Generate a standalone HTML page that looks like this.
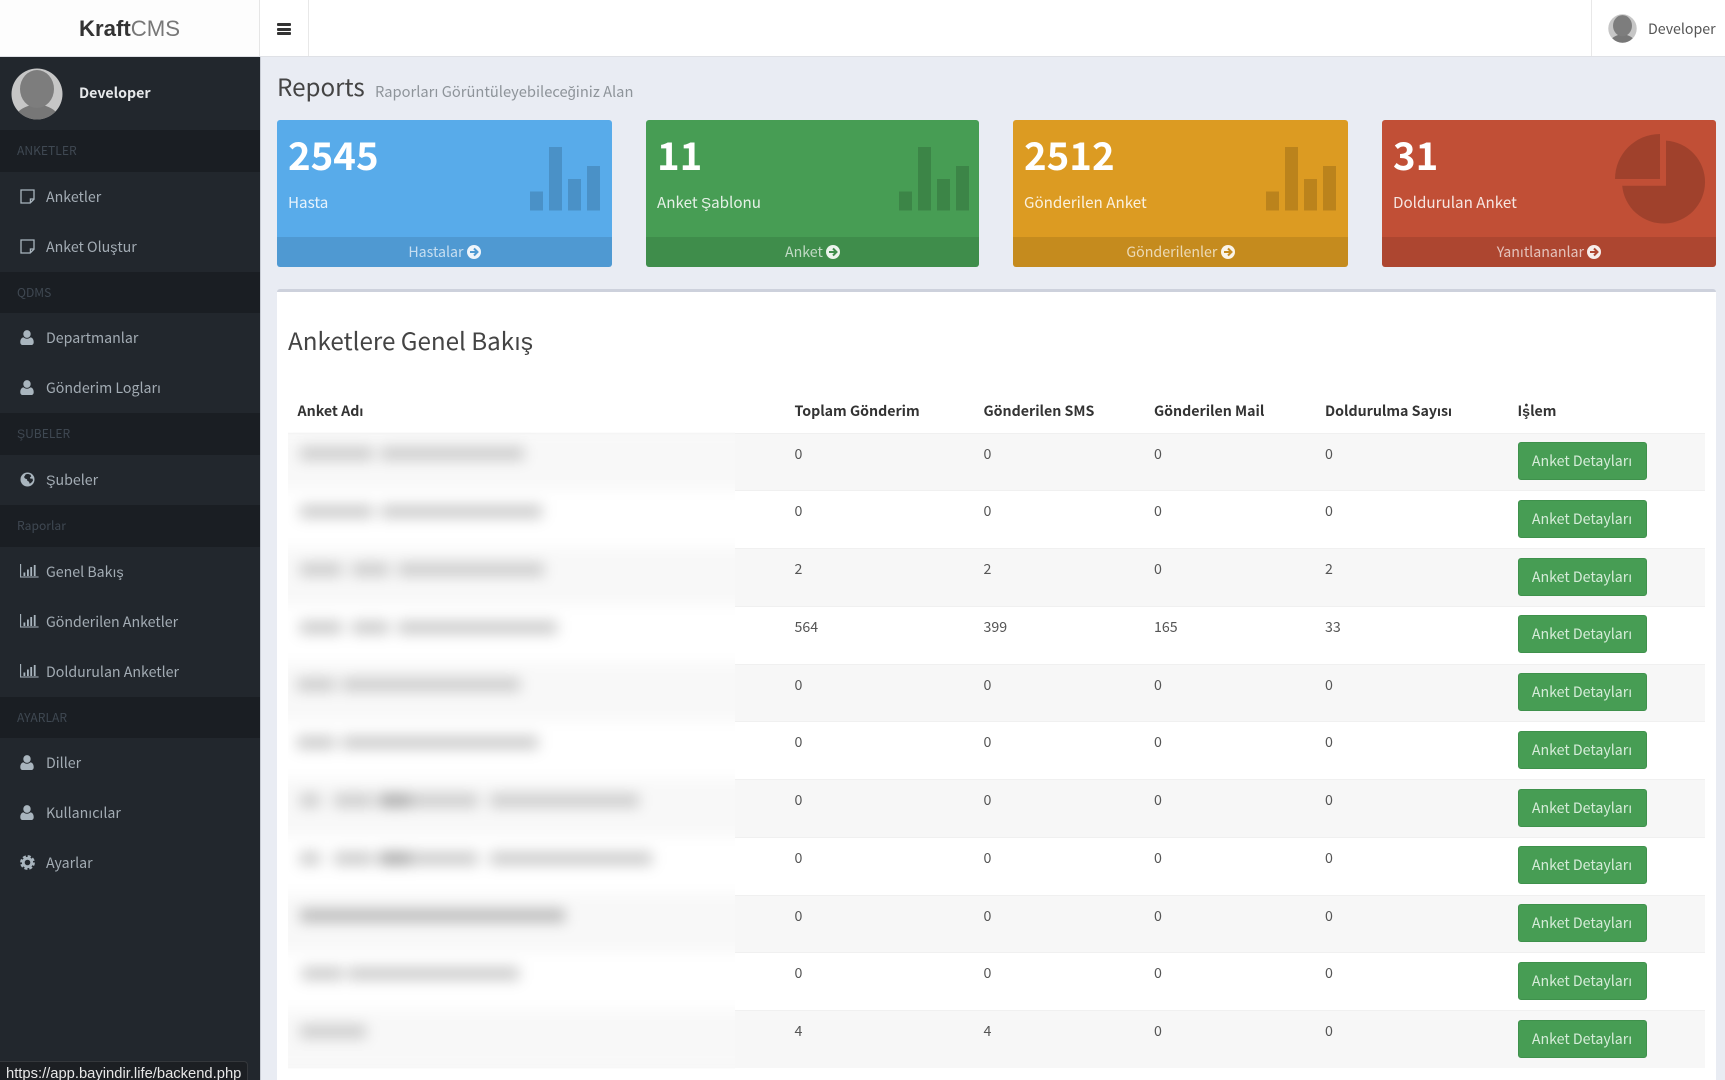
<!DOCTYPE html>
<html lang="tr">
<head>
<meta charset="utf-8">
<title>KraftCMS Reports</title>
<style>
*{box-sizing:border-box}
html,body{margin:0;padding:0;width:1725px;height:1080px;overflow:hidden;background:#e9ecf3}
body{position:relative;font-family:"Noto Sans CJK JP","Liberation Sans",sans-serif;font-size:14.2px;color:#444}
a{color:inherit;text-decoration:none}
.top{position:absolute;left:0;top:0;width:1725px;height:57px;background:#fff;border-bottom:1px solid #dfe1e6}
.logo{position:absolute;left:0;top:0;width:260px;height:56px;background:#fdfdfd;border-right:1px solid #e6e6e6;text-align:center;font-family:"Liberation Sans",sans-serif;font-size:22.2px;line-height:58px;color:#777}
.logo b{color:#333}
.burger{position:absolute;left:260px;top:0;width:49px;height:56px;border-right:1px solid #e8e8e8}
.burger i{position:absolute;left:17px;width:14px;height:3px;background:#333;border-radius:1px}
.topuser{position:absolute;left:1591px;top:0;width:134px;height:56px;border-left:1px solid #e8e8e8}
.topuser span{position:absolute;left:56px;top:18px;line-height:22px;color:#555;white-space:nowrap}
.topuser svg{position:absolute;left:16px;top:14px}
.side{position:absolute;left:0;top:57px;width:261px;height:1023px;background:#22272d;border-right:1px solid #c9cdd5}
.panel{height:73px;position:relative}
.panel svg{position:absolute;left:11px;top:11px}
.panel b{position:absolute;left:79px;top:25px;line-height:23px;color:#e6e8ea;font-weight:700}
.hd{height:41.7px;background:#1a1e23;color:#3f4852;font-size:12.1px;line-height:42px;padding-left:17px}
.it{display:block;height:50px;position:relative;color:#a3acb4;line-height:51px;padding-left:46px}
.it svg{position:absolute;left:20px;top:17px;fill:#a9b5be}
.h1{position:absolute;left:277px;top:68px;font-size:24.2px;line-height:36px;color:#444}
.h2{position:absolute;left:375px;top:79px;font-size:14.7px;line-height:26px;color:#8e949a}
.card{position:absolute;top:120px;height:147px;border-radius:3px;overflow:hidden;color:#fff}
.card h3{position:absolute;left:11px;top:9px;margin:0;font-size:38.4px;line-height:50px;font-weight:700}
.card p{position:absolute;left:11px;top:70px;margin:0;font-size:15.2px;line-height:24px;color:rgba(255,255,255,.86)}
.card .bars{position:absolute;left:0;top:0}
.card a{position:absolute;left:0;bottom:0;width:100%;height:30px;background:rgba(0,0,0,.1);text-align:center;line-height:31px;color:rgba(255,255,255,.68)}
.card a svg{vertical-align:-2px}
.box{position:absolute;left:277px;top:289px;width:1439px;height:800px;background:#fff;border-top:3px solid #cdd1dc;border-radius:3px 3px 0 0}
.box h2{position:absolute;left:11px;top:29px;margin:0;font-size:24.2px;line-height:38px;font-weight:400;color:#444;white-space:nowrap}
table{position:absolute;left:288px;top:392px;width:1417px;display:block;border-collapse:collapse}
thead,tbody{display:block}
tr{display:grid;grid-template-columns:497px 189px 170.5px 171px 192.5px 197px}
th{display:block;text-align:left;padding:8px 9.5px 0;height:40.5px;line-height:22px;font-weight:700;color:#333;white-space:nowrap}
tbody tr{height:57.75px;border-top:1px solid #f0f0f0}
tbody tr:nth-child(odd){background:#f7f7f7}
td{display:block;padding:9px 9.5px 0;line-height:22px;color:#555}
td a{display:block;width:129px;height:38px;margin-top:-.5px;background:#479d54;border:1px solid #3f914c;border-radius:3px;text-align:center;line-height:37px;color:#d6ecd9;white-space:nowrap}
.blurw{position:absolute;left:288px;top:432px;width:447px;height:637px;overflow:hidden}
.blur{position:absolute;left:-20px;top:0;width:487px;height:637px;filter:blur(7px)}
.blur u{position:absolute;left:0;width:487px;height:57.75px;background:#f8f8f8}
.blur s{position:absolute;left:0;width:487px;height:57.75px;background:#fff}
.blur i{position:absolute;height:13px;background:#cacaca}
.status{position:absolute;left:0;top:1061px;width:248px;height:19px;background:#1c1f23;border:1px solid #34373b;border-left:0;border-bottom:0;border-radius:0 4px 0 0;font-family:"Liberation Sans",sans-serif;font-size:14.75px;line-height:24px;padding-left:6px;color:#e8e8e8;white-space:nowrap;overflow:hidden}
</style>
</head>
<body>
<svg width="0" height="0" style="position:absolute">
<defs>
<symbol id="note" viewBox="0 0 15 15"><path d="M1 1h13v9.2L10.2 14H1z" fill="none" stroke="#a9b5be" stroke-width="1.3"/><path d="M14 10h-3.6v4" fill="none" stroke="#a9b5be" stroke-width="1.3"/></symbol>
<symbol id="user" viewBox="0 0 14 15"><ellipse cx="7" cy="4" rx="3.7" ry="3.9"/><path d="M.3 12.2C.3 9.4 1.6 7.5 3.6 7.4c.9.8 2 1.3 3.4 1.3s2.5-.5 3.4-1.3c2 .1 3.3 2 3.3 4.8 0 1.7-1 2.8-2.4 2.8H2.700C1.300 15 .3 13.900.3 12.200z"/></symbol>
<symbol id="globe" viewBox="0 0 15 15"><circle cx="7.500" cy="7.500" r="7"/><path d="M5.500 2.500c1.500-.8 3.500-.5 5 .3l.8 1.700-1.300.8.500 1.500 2-.3.500 2c-.8 1.500-1.800 2.500-3.300 3.200l-.7-2-1.700-1-.3-1.500-2-.7-1-1.500 1-1.500z" fill="#22272d"/></symbol>
<symbol id="bar" viewBox="0 0 19 14"><path d="M.6 0v13h18" fill="none" stroke="#a9b5be" stroke-width="1.1"/><path d="M3.500 8.500h1.800V12H3.500zM7 5.500h1.800V12H7zM10.300 3h1.800v9h-1.800zM13.800 1h1.800v11h-1.800z"/></symbol>
<symbol id="cog" viewBox="0 0 15 15"><circle cx="7.500" cy="7.500" r="4.200" fill="none" stroke="#a9b5be" stroke-width="2.800"/><circle cx="7.500" cy="7.500" r="6.100" fill="none" stroke="#a9b5be" stroke-width="2.600" stroke-dasharray="3 1.790"/></symbol>
<symbol id="ava" viewBox="0 0 52 52"><circle cx="26" cy="26" r="25.500" fill="#c6c6c6"/><clipPath id="ac"><circle cx="26" cy="26" r="25.500"/></clipPath><g clip-path="url(#ac)"><path d="M4 52c0-7 5-11 13-14l5-2h8l5 2c8 3 13 7 13 14z" fill="#777"/><ellipse cx="26" cy="21" rx="17" ry="19" fill="#7d7d7d"/></g></symbol>
</defs>
</svg>

<div class="top">
  <div class="logo"><b>Kraft</b>CMS</div>
  <div class="burger"><i style="top:23px"></i><i style="top:27.500px"></i><i style="top:32px"></i></div>
  <div class="topuser"><svg width="29" height="29"><use href="#ava"/></svg><span>Developer</span></div>
</div>

<nav class="side">
  <div class="panel"><svg width="52" height="52"><use href="#ava"/></svg><b>Developer</b></div>
  <div class="hd">ANKETLER</div>
  <a class="it"><svg width="15" height="15"><use href="#note"/></svg>Anketler</a>
  <a class="it"><svg width="15" height="15"><use href="#note"/></svg>Anket Oluştur</a>
  <div class="hd">QDMS</div>
  <a class="it"><svg width="14" height="15"><use href="#user"/></svg>Departmanlar</a>
  <a class="it"><svg width="14" height="15"><use href="#user"/></svg>Gönderim Logları</a>
  <div class="hd">ŞUBELER</div>
  <a class="it"><svg width="15" height="15"><use href="#globe"/></svg>Şubeler</a>
  <div class="hd">Raporlar</div>
  <a class="it"><svg width="19" height="14"><use href="#bar"/></svg>Genel Bakış</a>
  <a class="it"><svg width="19" height="14"><use href="#bar"/></svg>Gönderilen Anketler</a>
  <a class="it"><svg width="19" height="14"><use href="#bar"/></svg>Doldurulan Anketler</a>
  <div class="hd">AYARLAR</div>
  <a class="it"><svg width="14" height="15"><use href="#user"/></svg>Diller</a>
  <a class="it"><svg width="14" height="15"><use href="#user"/></svg>Kullanıcılar</a>
  <a class="it"><svg width="15" height="15"><use href="#cog"/></svg>Ayarlar</a>
</nav>

<div class="h1">Reports</div>
<div class="h2">Raporları Görüntüleyebileceğiniz Alan</div>

<div class="card" style="left:277px;width:335px;background:#58abea">
  <svg class="bars" width="335" height="117" fill="rgba(0,0,0,.15)"><rect x="253" y="71.500" width="13" height="19"/><rect x="272" y="27" width="13" height="63.500"/><rect x="291" y="59" width="13" height="31.500"/><rect x="310" y="46" width="13" height="44.500"/></svg>
  <h3>2545</h3><p>Hasta</p>
  <a>Hastalar <svg width="14" height="14" viewBox="0 0 14 14"><circle cx="7" cy="7" r="7" fill="#fff" fill-opacity=".9"/><path d="M3 7h7M7 3.500L10.500 7 7 10.500" fill="none" stroke="#4f9ad2" stroke-width="2"/></svg></a>
</div>
<div class="card" style="left:646px;width:333px;background:#479d54">
  <svg class="bars" width="333" height="117" fill="rgba(0,0,0,.15)"><rect x="253" y="71.500" width="13" height="19"/><rect x="272" y="27" width="13" height="63.500"/><rect x="291" y="59" width="13" height="31.500"/><rect x="310" y="46" width="13" height="44.500"/></svg>
  <h3>11</h3><p>Anket Şablonu</p>
  <a>Anket <svg width="14" height="14" viewBox="0 0 14 14"><circle cx="7" cy="7" r="7" fill="#fff" fill-opacity=".9"/><path d="M3 7h7M7 3.500L10.500 7 7 10.500" fill="none" stroke="#408d4c" stroke-width="2"/></svg></a>
</div>
<div class="card" style="left:1013px;width:335px;background:#dc9b22">
  <svg class="bars" width="335" height="117" fill="rgba(0,0,0,.15)"><rect x="253" y="71.500" width="13" height="19"/><rect x="272" y="27" width="13" height="63.500"/><rect x="291" y="59" width="13" height="31.500"/><rect x="310" y="46" width="13" height="44.500"/></svg>
  <h3>2512</h3><p>Gönderilen Anket</p>
  <a>Gönderilenler <svg width="14" height="14" viewBox="0 0 14 14"><circle cx="7" cy="7" r="7" fill="#fff" fill-opacity=".9"/><path d="M3 7h7M7 3.500L10.500 7 7 10.500" fill="none" stroke="#c68b1e" stroke-width="2"/></svg></a>
</div>
<div class="card" style="left:1382px;width:334px;background:#c14f36">
  <svg class="bars" width="334" height="117" fill="rgba(0,0,0,.17)"><path d="M284 65.700V20.600A41.500 41.500 0 1 1 240.200 65.700Z"/><path d="M278 59H233A45 45 0 0 1 278 14Z"/></svg>
  <h3>31</h3><p>Doldurulan Anket</p>
  <a>Yanıtlananlar <svg width="14" height="14" viewBox="0 0 14 14"><circle cx="7" cy="7" r="7" fill="#fff" fill-opacity=".9"/><path d="M3 7h7M7 3.500L10.500 7 7 10.500" fill="none" stroke="#ae4731" stroke-width="2"/></svg></a>
</div>

<div class="box"><h2>Anketlere Genel Bakış</h2></div>

<table>
<thead><tr><th>Anket Adı</th><th>Toplam Gönderim</th><th>Gönderilen SMS</th><th>Gönderilen Mail</th><th>Doldurulma Sayısı</th><th>İşlem</th></tr></thead>
<tbody>
<tr><td></td><td>0</td><td>0</td><td>0</td><td>0</td><td><a>Anket Detayları</a></td></tr>
<tr><td></td><td>0</td><td>0</td><td>0</td><td>0</td><td><a>Anket Detayları</a></td></tr>
<tr><td></td><td>2</td><td>2</td><td>0</td><td>2</td><td><a>Anket Detayları</a></td></tr>
<tr><td></td><td>564</td><td>399</td><td>165</td><td>33</td><td><a>Anket Detayları</a></td></tr>
<tr><td></td><td>0</td><td>0</td><td>0</td><td>0</td><td><a>Anket Detayları</a></td></tr>
<tr><td></td><td>0</td><td>0</td><td>0</td><td>0</td><td><a>Anket Detayları</a></td></tr>
<tr><td></td><td>0</td><td>0</td><td>0</td><td>0</td><td><a>Anket Detayları</a></td></tr>
<tr><td></td><td>0</td><td>0</td><td>0</td><td>0</td><td><a>Anket Detayları</a></td></tr>
<tr><td></td><td>0</td><td>0</td><td>0</td><td>0</td><td><a>Anket Detayları</a></td></tr>
<tr><td></td><td>0</td><td>0</td><td>0</td><td>0</td><td><a>Anket Detayları</a></td></tr>
<tr><td></td><td>4</td><td>4</td><td>0</td><td>0</td><td><a>Anket Detayları</a></td></tr>
</tbody>
</table>

<div class="blurw"><div class="blur">
  <u style="top:0"></u><s style="top:57.750px"></s><u style="top:115.500px"></u><s style="top:173.250px"></s><u style="top:231px"></u><s style="top:288.750px"></s><u style="top:346.500px"></u><s style="top:404.250px"></s><u style="top:462px"></u><s style="top:519.750px"></s><u style="top:577.500px"></u>
  <i style="top:15px;left:32px;width:73px"></i><i style="top:15px;left:113px;width:143px"></i>
  <i style="top:73px;left:32px;width:73px"></i><i style="top:73px;left:113px;width:161px"></i>
  <i style="top:131px;left:32px;width:42px"></i><i style="top:131px;left:84px;width:37px"></i><i style="top:131px;left:130px;width:146px"></i>
  <i style="top:189px;left:32px;width:42px"></i><i style="top:189px;left:84px;width:37px"></i><i style="top:189px;left:130px;width:159px"></i>
  <i style="top:246px;left:29px;width:38px"></i><i style="top:246px;left:74px;width:178px"></i>
  <i style="top:304px;left:29px;width:38px"></i><i style="top:304px;left:74px;width:196px"></i>
  <i style="top:362px;left:32px;width:20px"></i><i style="top:362px;left:66px;width:39px"></i><i style="top:362px;left:111px;width:31px;background:#a8a8a8"></i><i style="top:362px;left:142px;width:68px"></i><i style="top:362px;left:222px;width:149px"></i>
  <i style="top:420px;left:32px;width:20px"></i><i style="top:420px;left:66px;width:39px"></i><i style="top:420px;left:111px;width:31px;background:#a8a8a8"></i><i style="top:420px;left:142px;width:68px"></i><i style="top:420px;left:222px;width:162px"></i>
  <i style="top:477px;left:32px;width:265px;background:#b8b8b8"></i>
  <i style="top:535px;left:34px;width:41px"></i><i style="top:535px;left:80px;width:171px"></i>
  <i style="top:593px;left:32px;width:66px"></i>
</div></div>

<div class="status">https://app.bayindir.life/backend.php</div>
</body>
</html>
